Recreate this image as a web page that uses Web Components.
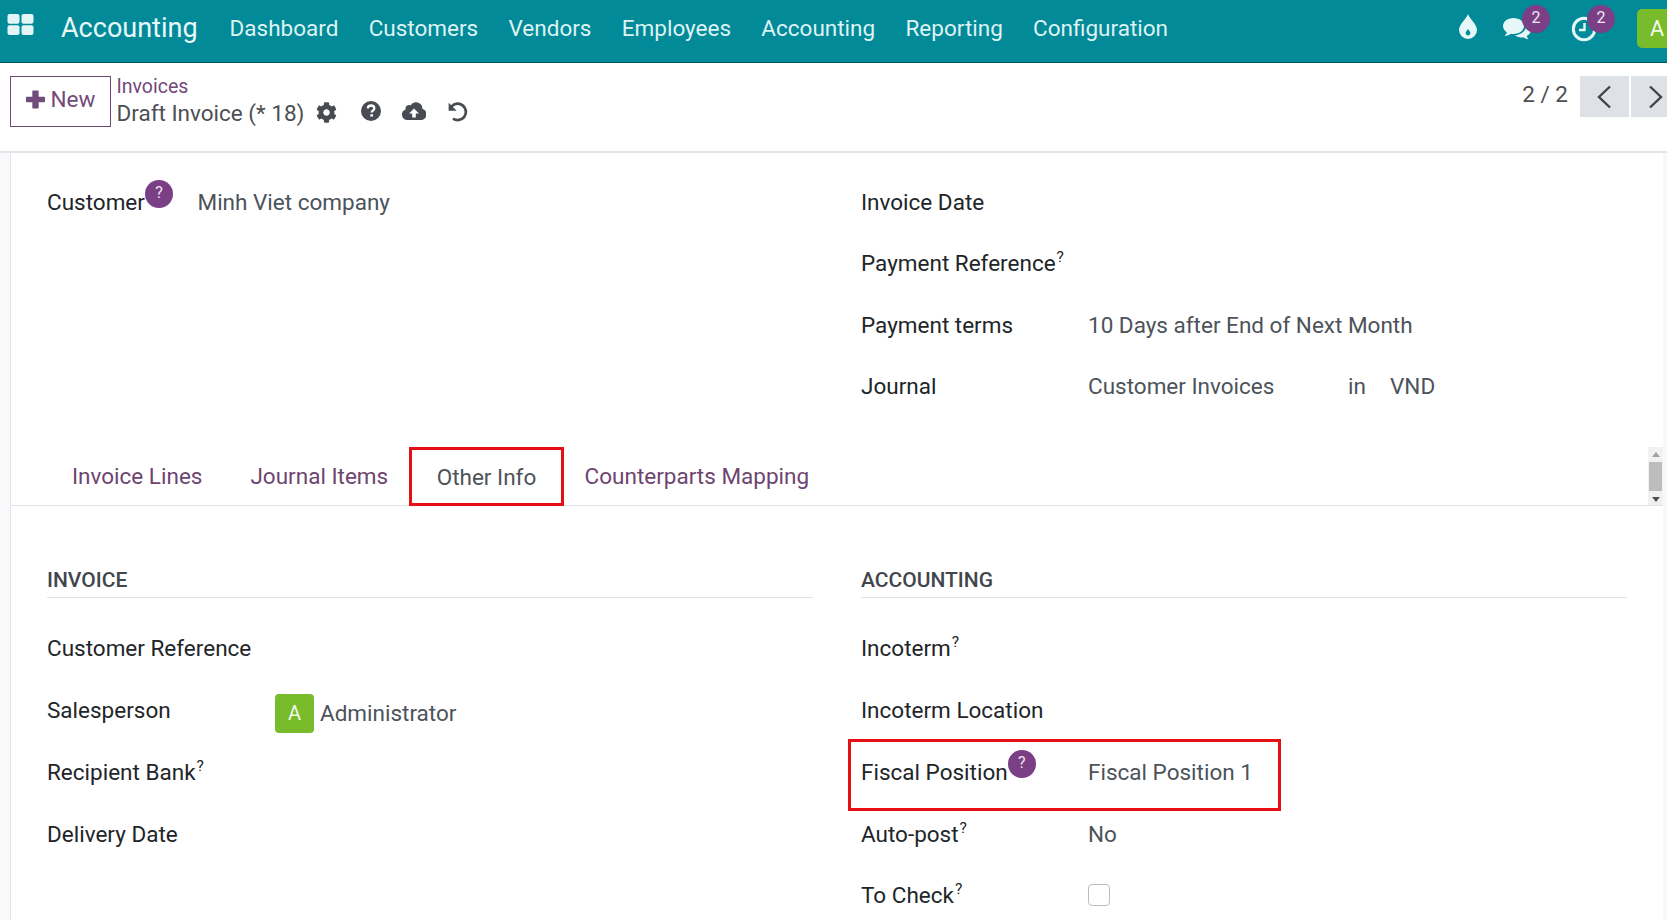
<!DOCTYPE html>
<html><head><meta charset="utf-8">
<style>
html,body{margin:0;padding:0;height:920px;overflow:hidden;background:#f8f9fa;font-family:Roboto,"Liberation Sans",sans-serif;font-size:22.5px;color:#212529}
</style></head><body>
<app-shell>
  <app-navbar>
    <nav-link>Dashboard</nav-link><nav-link>Customers</nav-link><nav-link>Vendors</nav-link><nav-link>Employees</nav-link><nav-link>Accounting</nav-link><nav-link>Reporting</nav-link><nav-link>Configuration</nav-link>
  </app-navbar>
  <control-panel></control-panel>
  <form-sheet>
    <form-columns style="--pad-top:18px;--rh:61.500px">
      <div>
        <form-row lw="150.500px"><span>Customer<help-dot></help-dot></span><span slot="value">Minh Viet company</span></form-row>
      </div>
      <div>
        <form-row lw="227px"><span>Invoice Date</span></form-row>
        <form-row lw="227px"><span>Payment Reference<sup-q></sup-q></span></form-row>
        <form-row lw="227px"><span>Payment terms</span><span slot="value">10 Days after End of Next Month</span></form-row>
        <form-row lw="227px"><span>Journal</span><span slot="value"><journal-value></journal-value></span></form-row>
      </div>
    </form-columns>
    <tab-bar></tab-bar>
    <form-columns style="--pad-top:57px;--rh:61.7px">
      <div>
        <group-title>INVOICE</group-title>
        <form-row lw="228px"><span>Customer Reference</span></form-row>
        <form-row lw="228px"><span>Salesperson</span><user-chip slot="value">Administrator</user-chip></form-row>
        <form-row lw="228px"><span>Recipient Bank<sup-q></sup-q></span></form-row>
        <form-row lw="228px"><span>Delivery Date</span></form-row>
      </div>
      <div>
        <group-title>ACCOUNTING</group-title>
        <form-row lw="227px"><span>Incoterm<sup-q></sup-q></span></form-row>
        <form-row lw="227px"><span>Incoterm Location</span></form-row>
        <form-row lw="227px" boxed><span>Fiscal Position<help-dot></help-dot></span><span slot="value">Fiscal Position 1</span></form-row>
        <form-row lw="227px"><span>Auto-post<sup-q></sup-q></span><span slot="value">No</span></form-row>
        <form-row lw="227px"><span>To Check<sup-q></sup-q></span><check-box slot="value"></check-box></form-row>
      </div>
    </form-columns>
  </form-sheet>
</app-shell>
<script>
function def(name, css, html, init){
  customElements.define(name, class extends HTMLElement{
    constructor(){super();const r=this.attachShadow({mode:'open'});r.innerHTML='<style>'+css+'</style>'+html;if(init)init(this,r);}
  });
}
const ICONS={
 apps:'<svg viewBox="0 0 26 21" width="27" height="21"><g fill="currentColor"><rect x="0" y="0" width="12" height="9.700" rx="2"/><rect x="14" y="0" width="12" height="9.700" rx="2"/><rect x="0" y="11.300" width="12" height="9.700" rx="2"/><rect x="14" y="11.300" width="12" height="9.700" rx="2"/></g></svg>',
 gear:'<svg viewBox="0 0 512 512" width="21" height="21"><path fill="currentColor" d="M487.4 315.7l-42.6-24.6c4.3-23.2 4.3-47 0-70.2l42.6-24.6c4.9-2.8 7.1-8.6 5.5-14-11.1-35.6-30-67.8-54.7-94.6-3.8-4.1-10-5.1-14.8-2.3L380.8 110c-17.9-15.4-38.5-27.3-60.8-35.1V25.8c0-5.6-3.9-10.5-9.4-11.7-36.7-8.2-74.3-7.8-109.2 0-5.5 1.2-9.4 6.1-9.4 11.7V75c-22.2 7.9-42.8 19.8-60.8 35.1L88.7 85.5c-4.9-2.8-11-1.9-14.8 2.3-24.7 26.7-43.6 58.9-54.7 94.6-1.7 5.4.6 11.2 5.5 14L67.3 221c-4.3 23.2-4.3 47 0 70.2l-42.6 24.6c-4.9 2.8-7.1 8.6-5.5 14 11.1 35.6 30 67.8 54.7 94.6 3.8 4.1 10 5.1 14.8 2.3l42.6-24.6c17.9 15.4 38.5 27.3 60.8 35.1v49.2c0 5.6 3.9 10.5 9.4 11.7 36.7 8.2 74.3 7.8 109.2 0 5.5-1.2 9.4-6.1 9.4-11.7v-49.2c22.2-7.9 42.8-19.8 60.8-35.1l42.6 24.6c4.9 2.8 11 1.9 14.8-2.3 24.7-26.7 43.6-58.9 54.7-94.6 1.5-5.5-.7-11.3-5.6-14.1zM256 336c-44.1 0-80-35.9-80-80s35.9-80 80-80 80 35.9 80 80-35.9 80-80 80z"/></svg>',
 help:'<svg viewBox="0 0 20 20" width="20" height="20"><circle cx="10" cy="10" r="10" fill="currentColor"/><path d="M6.8 7.4c.1-1.9 1.5-2.9 3.3-2.9 1.9 0 3.2 1.1 3.2 2.7 0 2.3-2.6 2.4-2.6 4.2" fill="none" stroke="#fff" stroke-width="2.3"/><rect x="9.4" y="13.2" width="2.5" height="2.4" fill="#fff"/></svg>',
 cloud:'<svg viewBox="0 0 24 18" width="24" height="18"><path fill="currentColor" d="M5.4 18A5.4 5.4 0 0 1 3.6 7.5 3.6 3.6 0 0 1 8.6 3.3 6.4 6.4 0 0 1 20.4 6.7 5.8 5.8 0 0 1 19 18z"/><path fill="#fff" d="M12 6.4l5 5h-3.2v4h-3.6v-4H7z"/></svg>',
 undo:'<svg viewBox="0 0 22 20" width="22" height="20"><path fill="none" stroke="currentColor" stroke-width="2.8" d="M4.6 4.4A8.2 8.2 0 1 1 6 16.6"/><path fill="currentColor" d="M1.6 .8l8 8h-8z"/></svg>',
 drop:'<svg viewBox="0 0 18 25" width="18" height="25"><path fill="currentColor" fill-rule="evenodd" d="M9 0c1.2 4.2 9 10.200 9 16a9 9 0 0 1-18 0C0 10.200 7.800 4.200 9 0zM9 15c-.6 1.400-2.400 2.400-2.400 4a2.400 2.400 0 0 0 4.800 0c0-1.600-1.800-2.600-2.400-4z"/></svg>',
 chat:'<svg viewBox="0 0 31 24" width="31" height="24"><path fill="currentColor" d="M11.500 1C5.700 1 1 4.600 1 9c0 2.500 1.500 4.700 3.800 6.200C4.500 16.800 3.500 18 2.500 19c2.600-.2 4.900-1.200 6.500-2.300.8.200 1.600.300 2.500.300 5.800 0 10.500-3.600 10.500-8s-4.700-8-10.500-8z"/><path fill="currentColor" d="M24 9c0 4.800-4.500 8.600-11 9.300 1.500 1.300 3.800 2.200 6.300 2.200.7 0 1.400-.1 2.100-.2 1.300.9 3 1.700 5.100 1.900-.8-.8-1.500-1.800-1.800-3.100 2.300-1.200 3.800-3 3.800-5.100 0-2.200-1.700-4.100-4.500-5z"/></svg>',
 clock:'<svg viewBox="0 0 26 26" width="26" height="26"><circle cx="13" cy="13" r="10.700" fill="none" stroke="currentColor" stroke-width="3"/><path d="M13.500 7v7H8" fill="none" stroke="currentColor" stroke-width="2.400"/></svg>'
};
def('app-icon',':host{display:inline-flex;line-height:0}','',(h,r)=>{r.innerHTML+=ICONS[h.getAttribute('name')]||'';});

def('nav-link',':host{display:block;color:#def3f3;font-size:22.5px;white-space:nowrap}','<slot></slot>');

def('notif-icon',`:host{display:block;position:relative;line-height:0;color:#e6f7f7}
  b{position:absolute;width:28px;height:28px;border-radius:50%;background:#7a3f85;color:#f1e6f3;font:400 16px/26px Roboto,sans-serif;text-align:center}`,
  '<app-icon></app-icon><b></b>',(h,r)=>{
    const i=r.querySelector('app-icon'); const n=h.getAttribute('name');
    i.shadowRoot.innerHTML+=ICONS[n];
    const b=r.querySelector('b'); b.textContent=h.getAttribute('count');
    b.style.left=h.getAttribute('bx')+'px'; b.style.top=h.getAttribute('by')+'px';
  });

def('app-navbar',`:host{display:flex;align-items:center;box-sizing:border-box;height:63px;background:#028a99;border-bottom:1px solid #04575f;overflow:hidden;padding-bottom:6px}
  .apps{color:#e3f5f6;margin-left:7px;margin-top:-7px;display:flex}
  .brand{color:#e8f8f8;font-size:27px;margin-left:27px;margin-right:32px;white-space:nowrap}
  .links{display:flex;gap:30.300px}
  .right{margin-left:auto;display:flex;align-items:center}
  .av{width:40px;height:39px;background:#78bb2b;color:#f2f9e9;border-radius:5px 0 0 5px;margin-left:40px;margin-right:-10px;font-size:21.67px;display:flex;align-items:center;justify-content:center;margin-top:1px}
  .drop{color:#e6f7f7;margin-top:-3px;margin-right:25px;display:flex}`,
  `<span class="apps"><app-icon name="apps"></app-icon></span><span class="brand">Accounting</span><div class="links"><slot></slot></div>
   <div class="right"><span class="drop"><app-icon name="drop"></app-icon></span>
   <notif-icon name="chat" count="2" bx="20" by="-12" style="margin-right:38px;margin-top:1px"></notif-icon>
   <notif-icon name="clock" count="2" bx="16" by="-11" style="margin-top:2px;margin-right:0"></notif-icon>
   <div class="av">A</div></div>`);

def('control-panel',`:host{display:flex;box-sizing:border-box;height:90px;background:#fff;border-bottom:2px solid #e3e5e8;padding:13px 0 0 10px;color:#4c4f54}
  .new{box-sizing:border-box;width:101px;height:51px;border:1px solid #6d4a75;color:#714b7b;display:flex;align-items:center;justify-content:center;gap:6px;font-size:22.5px;padding:0 0 5px 0}
  .new svg{display:block;margin-top:1px}
  .bc{margin-left:5.500px}
  .inv{color:#71497a;font-size:19.5px;line-height:22px;margin-top:0}
  .t{display:flex;align-items:center;font-size:22.5px;line-height:30px;margin-top:0;white-space:nowrap}
  .t app-icon{color:#484c52}
  .pager{margin-left:auto;display:flex;gap:2px;align-items:flex-start;font-size:22.5px}
  .cnt{line-height:37px;margin-right:10px}
  .b{width:49px;height:41px;background:#dee1e6;display:flex;align-items:center;justify-content:center}
  .b.n{width:36px;justify-content:flex-start;padding-left:16px;box-sizing:border-box}`,
  `<div class="new"><svg width="19" height="19" viewBox="0 0 18 18"><path fill="#714b7b" d="M6.500 .5h5a.8.8 0 0 1 .5.5v5.500h5.500a.8.8 0 0 1 .5.5v4a.8.8 0 0 1-.5.5H12v5.500a.8.8 0 0 1-.5.5h-5a.8.8 0 0 1-.5-.5V11.500H.5a.8.8 0 0 1-.5-.5V7a.8.8 0 0 1 .5-.5H6V1a.8.8 0 0 1 .5-.5z"/></svg>New</div>
   <div class="bc"><div class="inv">Invoices</div>
     <div class="t">Draft Invoice (* 18)
      <app-icon name="gear" style="margin-left:11.500px;margin-top:-1px"></app-icon>
      <app-icon name="help" style="margin-left:24px;margin-top:-5px"></app-icon>
      <app-icon name="cloud" style="margin-left:21px;margin-top:-4px"></app-icon>
      <app-icon name="undo" style="margin-left:21px;margin-top:-3px"></app-icon></div></div>
   <div class="pager"><span class="cnt">2 / 2</span>
    <div class="b"><svg width="17" height="24" viewBox="0 0 17 24"><path d="M14 1.500 3 12l11 10.500" fill="none" stroke="#3f444b" stroke-width="2.400"/></svg></div>
    <div class="b n"><svg width="17" height="24" viewBox="0 0 17 24"><path d="M3 1.500 14 12 3 22.500" fill="none" stroke="#3f444b" stroke-width="2.400"/></svg></div></div>`);

def('form-sheet',`:host{display:block;background:#fff;margin:0 4px 0 10px;border-left:1px solid #e3e5e8;height:767px;overflow:hidden}`,'<slot></slot>');

def('form-columns',`:host{display:grid;grid-template-columns:766px 766px;column-gap:48px;padding:var(--pad-top,0) 0 0 36px}`,'<slot></slot>');

def('form-row',`:host{display:flex;position:relative;height:var(--rh,61.4px);align-items:center;box-sizing:border-box;white-space:nowrap}
  .l{flex:none;width:var(--lw);color:#212529}
  .v{color:#4c535a}
  .box{position:absolute;left:-13px;top:-1.500px;width:433px;height:72px;box-sizing:border-box;border:3px solid #e60f14;pointer-events:none}`,
  '<div class="l"><slot></slot></div><div class="v"><slot name="value"></slot></div>',
  (h,r)=>{h.style.setProperty('--lw',h.getAttribute('lw'));
    if(h.hasAttribute('boxed')){const d=document.createElement('div');d.className='box';r.appendChild(d);}});

def('help-dot',`:host{display:inline-block;position:relative;width:28px;height:0;line-height:0;vertical-align:baseline}
  i{position:absolute;left:0;top:-29.500px;width:28px;height:28px;border-radius:50%;background:#7a3f85;color:#efe4f1;font:normal 16px/26px Roboto,sans-serif;text-align:center}`,'<i>?</i>');
def('sup-q',`:host{font-size:15.500px;vertical-align:9px;line-height:0;margin-left:1px}`,'?');

def('journal-value',`:host{display:flex;color:#4c535a}.a{width:260px}.b{width:42px}`,'<span class="a">Customer Invoices</span><span class="b">in</span><span>VND</span>');

def('group-title',`:host{display:flex;align-items:flex-end;box-sizing:border-box;height:40px;padding-bottom:4px;font-weight:500;font-size:21px;line-height:26px;color:#41464c;border-bottom:1px solid #e0e2e5;margin-bottom:20px;margin-top:-5px}`,'<slot></slot>');

def('user-chip',`:host{display:flex;align-items:center;gap:6px;color:#4c535a;margin-top:6px}
  i{display:flex;width:39px;height:39px;border-radius:4px;background:#78bb2b;color:#f2f9e9;font-style:normal;align-items:center;justify-content:center;font-size:20px}`,
  '<i>A</i><slot></slot>');
def('check-box',`:host{display:block;box-sizing:border-box;width:22px;height:22px;border:1px solid #b9bdc2;border-radius:4px;background:#fff;margin-top:0}`,'');

def('tab-bar',`:host{display:flex;box-sizing:content-box;height:58px;margin-top:29.600px;padding-left:37px;border-bottom:1px solid #e0e2e5;position:relative;align-items:stretch;font-size:22.5px;color:#6d4570}
  .t{padding:1px 24px 0;display:flex;align-items:center;white-space:nowrap}
  .a{box-sizing:border-box;color:#4d5358;border:3px solid #e60f14;padding:1px 25px 0;margin:0 -3.700px -1px -3.500px;position:relative}
  .s{margin-left:auto;width:15px;height:58px;background:#f1f1f1;display:flex;flex-direction:column;align-items:center;justify-content:space-between;padding:5px 0 3px;box-sizing:border-box}
  .s u{display:block;width:13px;height:29px;background:#bdbdbd}
  .s svg{display:block}`,
  `<div class="t">Invoice Lines</div><div class="t">Journal Items</div><div class="t a">Other Info</div><div class="t">Counterparts Mapping</div>
   <div class="s"><svg width="8" height="5"><path d="M4 0l4 5H0z" fill="#a3a3a3"/></svg><u></u><svg width="8" height="5"><path d="M0 0h8L4 5z" fill="#505050"/></svg></div>`);

def('app-shell',`:host{display:block;width:1667px;height:920px;overflow:hidden}`,'<slot></slot>');
</script>
</body></html>
